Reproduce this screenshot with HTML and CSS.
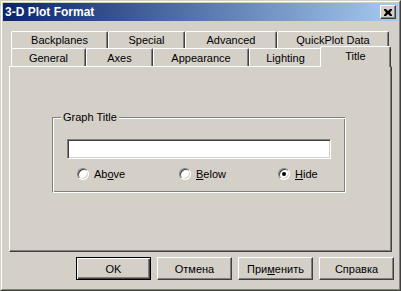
FILE: index.html
```html
<!DOCTYPE html>
<html lang="ru">
<head>
  <meta charset="UTF-8" />
  <title>3-D Plot Format</title>
  <link rel="stylesheet" href="styles.css">
</head>
<body>
  <div class="window">
    <div class="frame">
      <div class="titlebar">
        <span class="caption">3-D Plot Format</span>
        <button class="close" aria-label="Close">
          <svg width="8" height="7" viewBox="0 0 8 7"><path d="M0 0h2l2 2 2-2h2v1L6 3.5 8 6v1H6L4 5 2 7H0V6l2-2.5L0 1z" fill="#000"/></svg>
        </button>
      </div>

      <div class="tabctl">
        <div class="tabrow back">
          <div class="tab w97">Backplanes</div>
          <div class="tab w77">Special</div>
          <div class="tab w92">Advanced</div>
          <div class="tab w112">QuickPlot Data</div>
        </div>
        <div class="tabrow front">
          <div class="tab w75">General</div>
          <div class="tab w67">Axes</div>
          <div class="tab w96">Appearance</div>
          <div class="tab w73">Lighting</div>
          <div class="tab active">Title</div>
        </div>
        <div class="panel">
          <div class="group">
            <span class="group-label">Graph Title</span>
            <div class="textbox"></div>
            <div class="radios">
              <label class="radio-item w102"><span class="radio"></span><span>Ab<u>o</u>ve</span></label>
              <label class="radio-item w99"><span class="radio"></span><span><u>B</u>elow</span></label>
              <label class="radio-item"><span class="radio checked"></span><span><u>H</u>ide</span></label>
            </div>
          </div>
        </div>
      </div>

      <div class="buttons">
        <button class="btn default">OK</button>
        <button class="btn">Отмена</button>
        <button class="btn">При<u>м</u>енить</button>
        <button class="btn">Справка</button>
      </div>
    </div>
  </div>
</body>
</html>
```

FILE: styles.css
```css
* {
  margin: 0;
  padding: 0;
  box-sizing: border-box;
}
body {
  background: #d4d0c8;
  font-family: 'Liberation Sans', Arial, sans-serif;
  font-size: 11px;
  color: #000;
}
.window {
  width: 401px;
  height: 291px;
  border: 1px solid;
  border-color: #d4d0c8 #404040 #404040 #d4d0c8;
  background: #d4d0c8;
}
.frame {
  height: 100%;
  border: 1px solid;
  border-color: #fff #808080 #808080 #fff;
  padding: 1px;
}
.titlebar {
  height: 18px;
  display: flex;
  justify-content: space-between;
  align-items: flex-start;
  background: linear-gradient(to right, #0a246a, #a6caf0);
  padding-left: 2px;
}
.caption {
  color: #fff;
  font-weight: bold;
  font-size: 12px;
  line-height: 18px;
}
.close {
  width: 16px;
  height: 14px;
  margin: 2px 2px 0 0;
  background: #d4d0c8;
  border: 1px solid;
  border-color: #fff #404040 #404040 #fff;
  box-shadow: inset -1px -1px #808080;
  display: flex;
  align-items: center;
  justify-content: center;
}
.tabctl {
  margin: 10px 0 0 6px;
  width: 383px;
}
.tabrow {
  display: flex;
  padding-left: 2px;
  align-items: flex-end;
}
.tabrow.back {
  height: 17px;
}
.tabrow.front {
  height: 18px;
}
.tab {
  height: 100%;
  border-top: 1px solid #fff;
  border-left: 1px solid #fff;
  border-right: 1px solid #404040;
  border-radius: 2px 2px 0 0;
  box-shadow: inset -1px 0 #808080;
  text-align: center;
  line-height: 19px;
  white-space: nowrap;
}
.tabrow.back .tab {
  line-height: 17px;
}
.tab.active {
  position: relative;
  z-index: 1;
  width: 71px;
  height: 21px;
  margin: 0 0 -1px -2px;
  background: #d4d0c8;
  line-height: 19px;
}
.w67 { width: 67px; }
.w73 { width: 73px; }
.w75 { width: 75px; }
.w77 { width: 77px; }
.w92 { width: 92px; }
.w96 { width: 96px; }
.w97 { width: 97px; }
.w99 { width: 99px; }
.w102 { width: 102px; }
.w112 { width: 112px; }
.panel {
  height: 186px;
  border: 1px solid;
  border-color: #fff #404040 #404040 #fff;
  box-shadow: inset -1px -1px #808080;
  padding: 50px 0 0 42px;
}
.group {
  position: relative;
  width: 294px;
  height: 76px;
  border: 1px solid;
  border-color: #808080 #fff #fff #808080;
  box-shadow: inset 1px 1px #fff, inset -1px -1px #808080;
  padding: 21px 14px 0 14px;
}
.group-label {
  position: absolute;
  top: -7px;
  left: 8px;
  padding: 0 2px;
  background: #d4d0c8;
  line-height: 13px;
}
.textbox {
  height: 20px;
  background: #fff;
  border: 1px solid;
  border-color: #808080 #fff #fff #808080;
  box-shadow: inset 1px 1px #404040, inset -1px -1px #d4d0c8;
}
.radios {
  display: flex;
  margin: 9px 0 0 10px;
}
.radio-item {
  display: flex;
  align-items: center;
  gap: 5px;
  height: 12px;
}
.radio {
  width: 12px;
  height: 12px;
  border-radius: 50%;
  background: #fff;
  border: 1px solid;
  border-color: #808080 #fff #fff #808080;
  box-shadow: inset 1px 1px #404040, inset -1px -1px #d4d0c8;
  display: flex;
  align-items: center;
  justify-content: center;
}
.radio.checked::after {
  content: '';
  width: 4px;
  height: 4px;
  border-radius: 50%;
  background: #000;
}
.buttons {
  display: flex;
  justify-content: flex-end;
  gap: 6px;
  margin: 5px 4px 0 0;
}
.btn {
  width: 75px;
  height: 23px;
  font: inherit;
  color: #000;
  background: #d4d0c8;
  border: 1px solid;
  border-color: #fff #404040 #404040 #fff;
  box-shadow: inset -1px -1px #808080;
}
.btn.default {
  border: 1px solid #000;
  box-shadow: inset 1px 1px #fff, inset -1px -1px #404040, inset -2px -2px #808080;
}
```
